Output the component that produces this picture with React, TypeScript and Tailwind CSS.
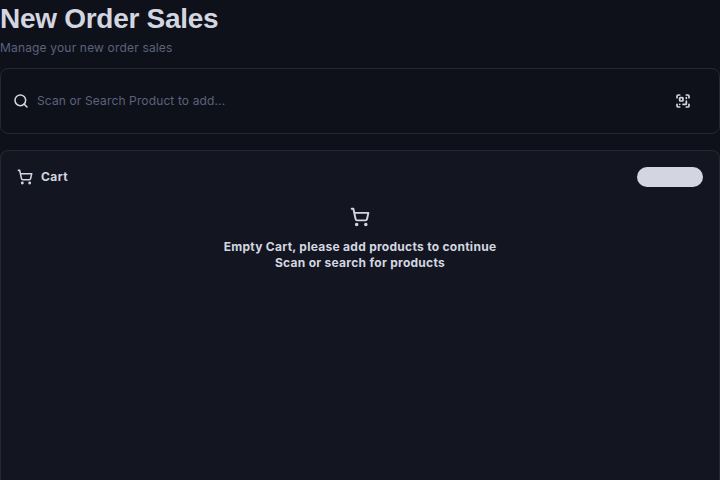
import { ScanQrCode, Search, ShoppingCart } from "lucide-react";

export default function App() {
  return (
    <main className="flex h-[480px] w-[720px] flex-col overflow-hidden bg-[#0e1119] font-[Inter,sans-serif] text-[#d3d6e0]">
      <header className="h-[68px] shrink-0">
        <h1 className="h-9 whitespace-nowrap pt-px font-['Liberation_Sans',sans-serif] text-[28px] leading-9 font-bold tracking-[-0.28px]">New Order Sales</h1>
        <p className="mt-1 whitespace-nowrap text-xs leading-4 tracking-[0.17px] text-[#5d617e]">Manage your new order sales</p>
      </header>
      <section className="flex h-[66px] shrink-0 items-center rounded-lg border border-[#252834] pr-7 pl-3">
        <Search size={16} strokeWidth={2.3} />
        <input
          className="ml-2 min-w-0 flex-1 bg-transparent text-xs tracking-[0.13px] outline-none placeholder:text-[#5d617e]"
          placeholder="Scan or Search Product to add..."
        />
        <button aria-label="Scan code"><ScanQrCode size={16} strokeWidth={2.6} /></button>
      </section>
      <section className="mt-4 flex-1 rounded-t-lg border border-b-0 border-[#252834] bg-[#131620] px-4 pt-4">
        <div className="flex h-5 items-center">
          <ShoppingCart size={16} strokeWidth={2.3} />
          <h2 className="ml-2 text-xs font-bold tracking-[0.4px]">Cart</h2>
          <button aria-label="Cart action" className="ml-auto h-5 w-[66px] rounded-full bg-[#d3d6e0]" />
        </div>
        <div className="mt-5 flex flex-col items-center text-center text-xs leading-4 font-bold tracking-[0.28px]">
          <ShoppingCart size={20} strokeWidth={2.3} />
          <p className="mt-3">Empty Cart, please add products to continue</p>
          <p>Scan or search for products</p>
        </div>
      </section>
    </main>
  );
}
